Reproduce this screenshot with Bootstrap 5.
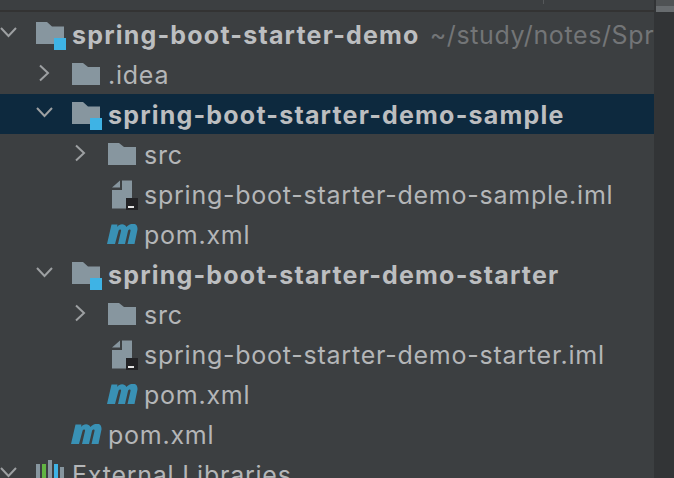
<!DOCTYPE html>
<html><head><meta charset="utf-8">
<link href="https://cdn.jsdelivr.net/npm/bootstrap@5.3.0/dist/css/bootstrap.min.css" rel="stylesheet">
<style>
html,body{height:478px;overflow:hidden;background:#3c3f41}
body{font-family:Inter,"Liberation Sans",sans-serif;color:#b4b6b8}
.panel{height:478px;overflow:hidden}
.main{width:654px;overflow:hidden;flex:none}
.topstrip{height:10px;background:#3c3f41;position:relative}
.topstrip i{position:absolute;left:543px;top:0;width:1px;height:4px;background:#55585a}
.rule{height:2px;background:#333333}
.tree{padding-top:2px}
.trow{height:40px;padding-top:2px;white-space:nowrap;font-size:25px;letter-spacing:.76px}
.trow.sel{background:#0d293e}
.trow b{font-weight:700;letter-spacing:1.2px;color:#bcbec0}
.trow b,.trow .txt{margin-top:2px}
.l0{padding-left:0}.l1{padding-left:36px}.l2{padding-left:72px}
.arrow{width:36px;flex:none}
.ico{width:36px;flex:none;display:flex;align-items:center}
.ico .mvn{margin-left:-1px}
.hint{color:#737577;margin-left:10px;letter-spacing:.62px}
.rail{width:20px;flex:none;background:#323436}
.thumb{height:6px;margin-left:2px;background:#4f5254}
.thumb2{height:6px;margin-left:2px;background:#686c6f}
</style></head><body>
<svg width="0" height="0" class="d-block position-absolute">
<defs>
<symbol id="open" viewBox="0 0 36 40"><path d="M1 13 8.500 21 16 13" fill="none" stroke="#9da0a2" stroke-width="2"/></symbol>
<symbol id="closed" viewBox="0 0 36 40"><path d="M4 10.500 12 18 4 25.500" fill="none" stroke="#9da0a2" stroke-width="2"/></symbol>
<symbol id="folder" viewBox="0 0 28 26"><path d="M0 1H11L16 5H28V23H0Z" fill="#87969f"/></symbol>
<symbol id="module" viewBox="0 0 32 30"><path d="M0 2H11L16 6.500H28V18H18V24H0Z" fill="#87969f"/><rect x="18" y="18" width="12" height="12" fill="#3eb3e5"/></symbol>
<symbol id="iml" viewBox="0 0 30 30"><path d="M4 7.500 12 .500V7.500ZM14 .500H24V18H18V28.500H4V10H14Z" fill="#87969f"/><rect x="18" y="18" width="12" height="12" fill="#222225"/><rect x="20" y="26" width="6" height="2" fill="#e4e4e4"/></symbol>
<symbol id="maven" viewBox="0 0 31 22"><path d="M0 20 4.500 .500H10.500L10 3C12.500 -.5 17.500 -1 19.500 3 22.500 -1 31 -2.500 30.500 5.500L27.500 20H20.500L23.500 7C24 5 21.500 5 21 7L18 20H11L14 7C14.500 5 12 5 11.500 7L8 20Z" fill="#3991b5"/></symbol>
</defs></svg>
<div class="panel d-flex">
<div class="main">
<div class="topstrip"><i></i></div><div class="rule"></div>
<div class="tree">
<div class="trow l0 d-flex align-items-center"><svg class="arrow" width="36" height="40"><use href="#open"/></svg><span class="ico"><svg width="32" height="30"><use href="#module"/></svg></span><b>spring-boot-starter-demo</b><span class="txt hint">~/study/notes/Spr</span></div>
<div class="trow l1 d-flex align-items-center"><svg class="arrow" width="36" height="40"><use href="#closed"/></svg><span class="ico"><svg width="28" height="26"><use href="#folder"/></svg></span><span class="txt">.idea</span></div>
<div class="trow sel l1 d-flex align-items-center"><svg class="arrow" width="36" height="40"><use href="#open"/></svg><span class="ico"><svg width="32" height="30"><use href="#module"/></svg></span><b>spring-boot-starter-demo-sample</b></div>
<div class="trow l2 d-flex align-items-center"><svg class="arrow" width="36" height="40"><use href="#closed"/></svg><span class="ico"><svg width="28" height="26"><use href="#folder"/></svg></span><span class="txt">src</span></div>
<div class="trow l2 d-flex align-items-center"><span class="arrow"></span><span class="ico"><svg width="30" height="30"><use href="#iml"/></svg></span><span class="txt">spring-boot-starter-demo-sample.iml</span></div>
<div class="trow l2 d-flex align-items-center"><span class="arrow"></span><span class="ico"><svg class="mvn" width="31" height="22"><use href="#maven"/></svg></span><span class="txt">pom.xml</span></div>
<div class="trow l1 d-flex align-items-center"><svg class="arrow" width="36" height="40"><use href="#open"/></svg><span class="ico"><svg width="32" height="30"><use href="#module"/></svg></span><b>spring-boot-starter-demo-starter</b></div>
<div class="trow l2 d-flex align-items-center"><svg class="arrow" width="36" height="40"><use href="#closed"/></svg><span class="ico"><svg width="28" height="26"><use href="#folder"/></svg></span><span class="txt">src</span></div>
<div class="trow l2 d-flex align-items-center"><span class="arrow"></span><span class="ico"><svg width="30" height="30"><use href="#iml"/></svg></span><span class="txt">spring-boot-starter-demo-starter.iml</span></div>
<div class="trow l2 d-flex align-items-center"><span class="arrow"></span><span class="ico"><svg class="mvn" width="31" height="22"><use href="#maven"/></svg></span><span class="txt">pom.xml</span></div>
<div class="trow l1 d-flex align-items-center"><span class="arrow"></span><span class="ico"><svg class="mvn" width="31" height="22"><use href="#maven"/></svg></span><span class="txt">pom.xml</span></div>
<div class="trow l0 d-flex align-items-center"><svg class="arrow" width="36" height="40"><use href="#open"/></svg><span class="ico"><svg width="28" height="30" viewBox="0 0 28 30"><rect x="0" y="4" width="4" height="26" fill="#87969f"/><rect x="6" y="4" width="4" height="26" fill="#62b543"/><rect x="12" y="0" width="4" height="30" fill="#87969f"/><rect x="18" y="4" width="4" height="26" fill="#3eb3e5"/><rect x="24" y="7" width="4" height="23" fill="#87969f"/></svg></span><span class="txt">External Libraries</span></div>
</div>
</div>
<div class="rail"><div class="thumb"></div><div class="thumb2"></div></div>
</div>
<script src="https://cdn.jsdelivr.net/npm/bootstrap@5.3.0/dist/js/bootstrap.bundle.min.js"></script>
</body></html>
